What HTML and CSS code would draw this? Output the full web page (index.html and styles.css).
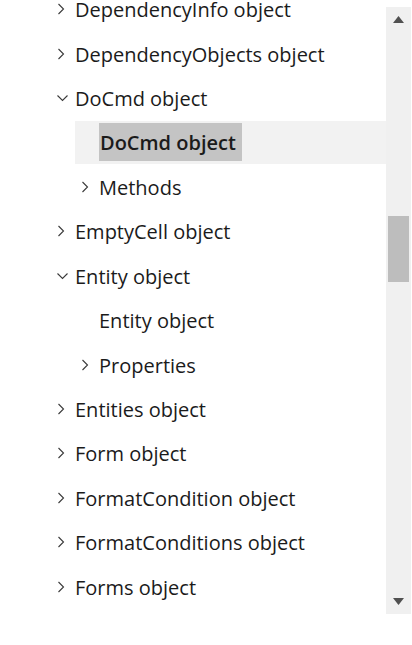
FILE: index.html
```html
<!DOCTYPE html>
<html>
<head>
<meta charset="utf-8">
<link rel="stylesheet" href="styles.css">
</head>
<body>
<div class="pane">
  <div class="tree">
    <ul class="list">
      <li class="row l1"><span class="chev"><svg width="12" height="12" viewBox="0 0 12 12"><path d="M1.5 1 L6.5 6 L1.5 11" /></svg></span><span class="label">DependencyInfo object</span></li>
      <li class="row l1"><span class="chev"><svg width="12" height="12" viewBox="0 0 12 12"><path d="M1.5 1 L6.5 6 L1.5 11" /></svg></span><span class="label">DependencyObjects object</span></li>
      <li class="row l1"><span class="chev"><svg width="12" height="12" viewBox="0 0 12 12"><path d="M0.5 3.5 L5.5 8.5 L10.5 3.5" /></svg></span><span class="label">DoCmd object</span></li>
      <li class="row l2 active"><span class="chev"></span><span class="label selected">DoCmd object</span></li>
      <li class="row l2"><span class="chev"><svg width="12" height="12" viewBox="0 0 12 12"><path d="M1.5 1 L6.5 6 L1.5 11" /></svg></span><span class="label">Methods</span></li>
      <li class="row l1"><span class="chev"><svg width="12" height="12" viewBox="0 0 12 12"><path d="M1.5 1 L6.5 6 L1.5 11" /></svg></span><span class="label">EmptyCell object</span></li>
      <li class="row l1"><span class="chev"><svg width="12" height="12" viewBox="0 0 12 12"><path d="M0.5 3.5 L5.5 8.5 L10.5 3.5" /></svg></span><span class="label">Entity object</span></li>
      <li class="row l2"><span class="chev"></span><span class="label">Entity object</span></li>
      <li class="row l2"><span class="chev"><svg width="12" height="12" viewBox="0 0 12 12"><path d="M1.5 1 L6.5 6 L1.5 11" /></svg></span><span class="label">Properties</span></li>
      <li class="row l1"><span class="chev"><svg width="12" height="12" viewBox="0 0 12 12"><path d="M1.5 1 L6.5 6 L1.5 11" /></svg></span><span class="label">Entities object</span></li>
      <li class="row l1"><span class="chev"><svg width="12" height="12" viewBox="0 0 12 12"><path d="M1.5 1 L6.5 6 L1.5 11" /></svg></span><span class="label">Form object</span></li>
      <li class="row l1"><span class="chev"><svg width="12" height="12" viewBox="0 0 12 12"><path d="M1.5 1 L6.5 6 L1.5 11" /></svg></span><span class="label">FormatCondition object</span></li>
      <li class="row l1"><span class="chev"><svg width="12" height="12" viewBox="0 0 12 12"><path d="M1.5 1 L6.5 6 L1.5 11" /></svg></span><span class="label">FormatConditions object</span></li>
      <li class="row l1"><span class="chev"><svg width="12" height="12" viewBox="0 0 12 12"><path d="M1.5 1 L6.5 6 L1.5 11" /></svg></span><span class="label">Forms object</span></li>
    </ul>
  </div>
  <div class="scrollbar">
    <div class="arrow"><svg width="11" height="7" viewBox="0 0 11 7"><path d="M5.5 0 L11 7 L0 7 Z" /></svg></div>
    <div class="track"><div class="thumb"></div></div>
    <div class="arrow down"><svg width="11" height="7" viewBox="0 0 11 7"><path d="M0 0 L11 0 L5.5 7 Z" /></svg></div>
  </div>
</div>
</body>
</html>
```
FILE: styles.css
```css
html, body {
  margin: 0;
  padding: 0;
  background: #ffffff;
}
body {
  font-family: "Open Sans", "Noto Sans", "Liberation Sans", sans-serif;
  color: #1b1b1b;
}
.pane {
  display: flex;
  flex-direction: row;
  width: 412px;
  height: 645px;
}
.tree {
  width: 386px;
  height: 614px;
  overflow: hidden;
}
.list {
  list-style: none;
  margin: -12.3px 0 0 0;
  padding: 0;
}
.row {
  display: flex;
  align-items: center;
  height: 43px;
  margin-bottom: 1.43px;
  padding-left: 6px;
  font-size: 20px;
  white-space: nowrap;
}
.l1 { margin-left: 51px; }
.l2 { margin-left: 75px; }
.active {
  background: #f2f2f2;
}
.chev {
  display: flex;
  align-items: center;
  width: 18px;
  height: 12px;
  flex: none;
}
.chev svg path {
  fill: none;
  stroke: #3a3a3a;
  stroke-width: 1.1;
}
.label {
  line-height: 28px;
  position: relative;
  top: 1px;
}
.selected {
  display: flex;
  align-items: center;
  height: 38px;
  top: 0;
  padding: 2px 6px 0 1px;
  box-sizing: border-box;
  background: #c4c4c4;
  font-weight: 600;
}
.scrollbar {
  display: flex;
  flex-direction: column;
  width: 25px;
  height: 607px;
  margin-top: 7px;
  background: #f0f0f0;
}
.arrow {
  display: flex;
  justify-content: center;
  align-items: center;
  height: 25px;
  flex: none;
}
.arrow svg path { fill: #505050; }
.track {
  flex: 1;
  display: flex;
  flex-direction: column;
  align-items: center;
}
.thumb {
  width: 21px;
  height: 66px;
  margin-top: 184px;
  background: #bdbdbd;
}
```
